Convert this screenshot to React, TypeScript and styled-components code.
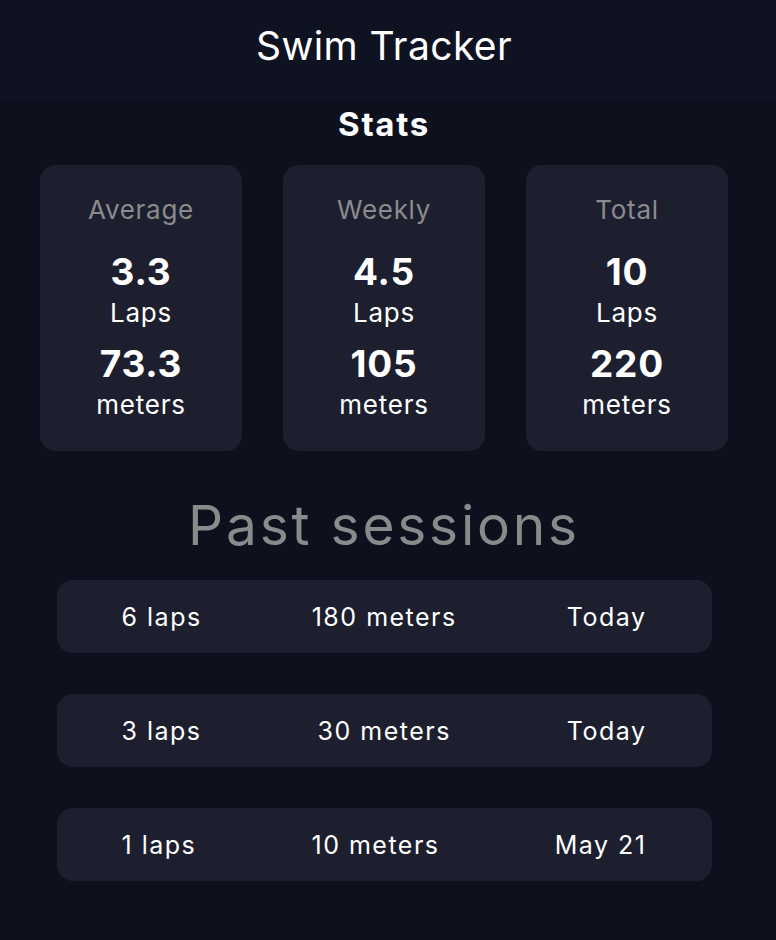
import React from "react";
import styled, { createGlobalStyle } from "styled-components";

const GlobalStyle = createGlobalStyle`
  html, body {
    margin: 0;
    padding: 0;
    background: #0d111e;
  }
  body {
    font-family: Inter, "Liberation Sans", sans-serif;
    color: #ffffff;
  }
`;

const Page = styled.div`
  width: 768px;
  min-height: 940px;
  display: flex;
  flex-direction: column;
  align-items: center;
`;

const Header = styled.header`
  width: 776px;
  margin-right: -8px;
  height: 100px;
  background: #0f1321;
  display: flex;
  justify-content: center;
  padding-top: 26px;
  padding-right: 8px;
  box-sizing: border-box;
`;

const Title = styled.h1`
  margin: 0;
  font-weight: 400;
  font-size: 39px;
  line-height: 40px;
  letter-spacing: 0.4px;
  color: #ffffff;
`;

const SectionTitle = styled.h2`
  margin: 8px 0 0;
  font-weight: 700;
  font-size: 33px;
  line-height: 33px;
  letter-spacing: 1.7px;
  color: #ffffff;
`;

const CardRow = styled.div`
  display: flex;
  gap: 41px;
  margin-top: 24px;
`;

const Card = styled.div`
  width: 202px;
  height: 286px;
  box-sizing: border-box;
  background: #1d1f2e;
  border-radius: 16px;
  padding-top: 29px;
  display: flex;
  flex-direction: column;
  align-items: center;
`;

const CardLabel = styled.div`
  font-size: 26px;
  line-height: 32px;
  letter-spacing: 0.7px;
  color: #8b8b8f;
  margin-bottom: 24px;
`;

const StatBlock = styled.div`
  display: flex;
  flex-direction: column;
  align-items: center;
  & + & {
    margin-top: 10px;
  }
`;

const StatValue = styled.div`
  font-size: 37px;
  font-weight: 700;
  line-height: 44px;
  letter-spacing: 0.8px;
  color: #ffffff;
`;

const StatUnit = styled.div`
  font-size: 26px;
  line-height: 38px;
  letter-spacing: 0.8px;
  color: #ffffff;
`;

const PastTitle = styled.h2`
  margin: 46px 0 0;
  font-weight: 400;
  font-size: 55px;
  line-height: 56px;
  letter-spacing: 2.8px;
  color: #8a8a8c;
`;

const SessionList = styled.div`
  margin-top: 27px;
  display: flex;
  flex-direction: column;
  gap: 41px;
`;

const SessionRow = styled.div`
  width: 655px;
  height: 73px;
  box-sizing: border-box;
  background: #1d1f2e;
  border-radius: 16px;
  padding: 0 65px;
  display: flex;
  align-items: center;
  justify-content: space-between;
`;

const SessionCell = styled.span`
  font-size: 25px;
  line-height: 30px;
  letter-spacing: 1.5px;
  color: #ffffff;
`;

const stats = [
  { label: "Average", laps: "3.3", meters: "73.3" },
  { label: "Weekly", laps: "4.5", meters: "105" },
  { label: "Total", laps: "10", meters: "220" },
];

const sessions = [
  { laps: "6 laps", meters: "180 meters", date: "Today" },
  { laps: "3 laps", meters: "30 meters", date: "Today" },
  { laps: "1 laps", meters: "10 meters", date: "May 21" },
];

export default function App() {
  return (
    <>
      <GlobalStyle />
      <Page>
        <Header>
          <Title>Swim Tracker</Title>
        </Header>
        <SectionTitle>Stats</SectionTitle>
        <CardRow>
          {stats.map((s) => (
            <Card key={s.label}>
              <CardLabel>{s.label}</CardLabel>
              <StatBlock>
                <StatValue>{s.laps}</StatValue>
                <StatUnit>Laps</StatUnit>
              </StatBlock>
              <StatBlock>
                <StatValue>{s.meters}</StatValue>
                <StatUnit>meters</StatUnit>
              </StatBlock>
            </Card>
          ))}
        </CardRow>
        <PastTitle>Past sessions</PastTitle>
        <SessionList>
          {sessions.map((s, i) => (
            <SessionRow key={i}>
              <SessionCell>{s.laps}</SessionCell>
              <SessionCell>{s.meters}</SessionCell>
              <SessionCell>{s.date}</SessionCell>
            </SessionRow>
          ))}
        </SessionList>
      </Page>
    </>
  );
}
